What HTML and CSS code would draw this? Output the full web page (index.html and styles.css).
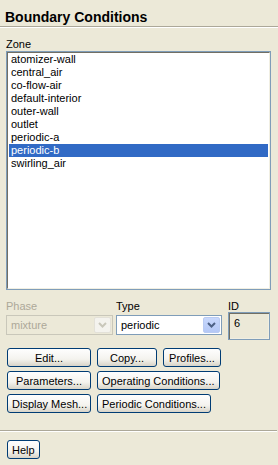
FILE: index.html
```html
<!DOCTYPE html>
<html lang="en">
<head>
    <meta charset="UTF-8">
    <meta name="viewport" content="width=device-width, initial-scale=1.0">
    <title>Boundary Conditions</title>
    <link rel="stylesheet" href="styles.css">
</head>
<body>
  <!-- Panel Header -->
  <h1 class="panel-title">Boundary Conditions</h1>

  <!-- Zone List -->
  <section class="zone-section">
    <div class="field-label zone-label">Zone</div>
    <div class="listbox">
      <ul class="listbox-inner">
        <li>atomizer-wall</li>
        <li>central_air</li>
        <li>co-flow-air</li>
        <li>default-interior</li>
        <li>outer-wall</li>
        <li>outlet</li>
        <li>periodic-a</li>
        <li class="selected">periodic-b</li>
        <li>swirling_air</li>
      </ul>
    </div>
  </section>

  <!-- Phase / Type / ID -->
  <section class="fields-row">
    <div class="field field-phase">
      <div class="field-label disabled">Phase</div>
      <div class="combo combo-disabled">
        <span class="combo-text">mixture</span>
        <span class="combo-arrow">
          <svg width="9" height="6" viewBox="0 0 9 6"><path d="M1 1 L4.5 4.5 L8 1" fill="none" stroke="#c9c7ba" stroke-width="2"/></svg>
        </span>
      </div>
    </div>
    <div class="field field-type">
      <div class="field-label">Type</div>
      <div class="combo">
        <span class="combo-text">periodic</span>
        <span class="combo-arrow">
          <svg width="9" height="6" viewBox="0 0 9 6"><path d="M1 1 L4.5 4.5 L8 1" fill="none" stroke="#4d6185" stroke-width="2"/></svg>
        </span>
      </div>
    </div>
    <div class="field field-id">
      <div class="field-label">ID</div>
      <div class="id-box">6</div>
    </div>
  </section>

  <!-- Action Buttons -->
  <section class="button-grid">
    <div class="button-row">
      <button class="btn btn-first">Edit...</button>
      <button class="btn btn-copy">Copy...</button>
      <button class="btn">Profiles...</button>
    </div>
    <div class="button-row">
      <button class="btn btn-first">Parameters...</button>
      <button class="btn">Operating Conditions...</button>
    </div>
    <div class="button-row">
      <button class="btn btn-first">Display Mesh...</button>
      <button class="btn">Periodic Conditions...</button>
    </div>
  </section>

  <hr class="separator">

  <div class="footer">
    <button class="btn btn-help">Help</button>
  </div>
</body>
</html>
```

FILE: styles.css
```css
* {
  box-sizing: border-box;
  margin: 0;
  padding: 0;
}

body {
  font-family: "Liberation Sans", Arial, sans-serif;
  font-size: 11px;
  line-height: 13px;
  color: #000;
  background-color: #ece9d8;
  width: 278px;
  height: 465px;
  overflow: hidden;
}

/* Header */

.panel-title {
  font-size: 14px;
  font-weight: bold;
  line-height: 17px;
  padding: 9px 0 0 5px;
  height: 27px;
  border-bottom: 1px solid #aca899;
  box-shadow: 0 1px 0 #fff;
}

/* Zone List */

.zone-section {
  padding: 0 7px 0 6px;
}

.field-label {
  height: 13px;
}

.field-label.disabled {
  color: #aca899;
}

.zone-label {
  margin-top: 11px;
}

.listbox {
  height: 239px;
  border: 1px solid #7f9db9;
  background-color: #fff;
}

.listbox-inner {
  list-style: none;
  height: 100%;
  border-top: 1px solid #716f64;
  border-left: 1px solid #716f64;
  border-right: 1px solid #f1efe2;
  border-bottom: 1px solid #f1efe2;
  padding: 0 1px;
}

.listbox-inner li {
  height: 13px;
  line-height: 13px;
  padding-left: 2px;
  white-space: nowrap;
}

.listbox-inner li.selected {
  background-color: #316ac5;
  color: #fff;
}

/* Phase / Type / ID */

.fields-row {
  display: flex;
  margin-top: 10px;
  padding-left: 6px;
}

.field-phase {
  width: 107px;
  margin-right: 3px;
}

.field-type {
  width: 106px;
  margin-right: 6px;
}

.field-id {
  width: 42px;
}

.combo {
  display: flex;
  align-items: center;
  height: 20px;
  margin-top: 2px;
  border: 1px solid #7f9db9;
  background-color: #fff;
  padding: 1px;
}

.combo-text {
  flex: 1;
  padding-left: 3px;
}

.combo-arrow {
  display: flex;
  align-items: center;
  justify-content: center;
  width: 17px;
  height: 100%;
  border-radius: 2px;
  background: linear-gradient(#c8d8fd, #b4c8f6);
  border: 1px solid #b9cbf3;
}

.combo-disabled {
  border-color: #c9c7ba;
  background-color: #ece9d8;
  color: #aca899;
}

.combo-disabled .combo-arrow {
  background: #f4f3ee;
  border-color: #e3e1d8;
}

.id-box {
  height: 28px;
  margin-top: -1px;
  border: 1px solid #7f9db9;
  box-shadow: inset 1px 1px 0 #716f64, inset -1px -1px 0 #f1efe2;
  padding: 4px 5px;
}

/* Buttons */

.button-grid {
  margin-top: 8px;
  padding-left: 7px;
}

.button-row {
  display: flex;
  gap: 6px;
  margin-bottom: 4px;
}

.btn {
  font-family: "Liberation Sans", Arial, sans-serif;
  font-size: 11px;
  height: 19px;
  min-width: 58px;
  padding: 0 4px;
  white-space: nowrap;
  color: #000;
  border: 1px solid #003c74;
  border-radius: 3px;
  background: linear-gradient(#fefefe, #f4f3ee 60%, #d8d4c8);
  cursor: pointer;
}

.btn-first {
  width: 84px;
}

.btn-copy {
  width: 60px;
}

.btn-help {
  min-width: 30px;
  padding: 0 4px;
}

/* Footer */

.separator {
  border: none;
  border-top: 1px solid #aca899;
  box-shadow: 0 1px 0 #fff;
  margin-top: 17px;
  margin-right: 1px;
}

.footer {
  padding: 9px 0 0 7px;
}
```
